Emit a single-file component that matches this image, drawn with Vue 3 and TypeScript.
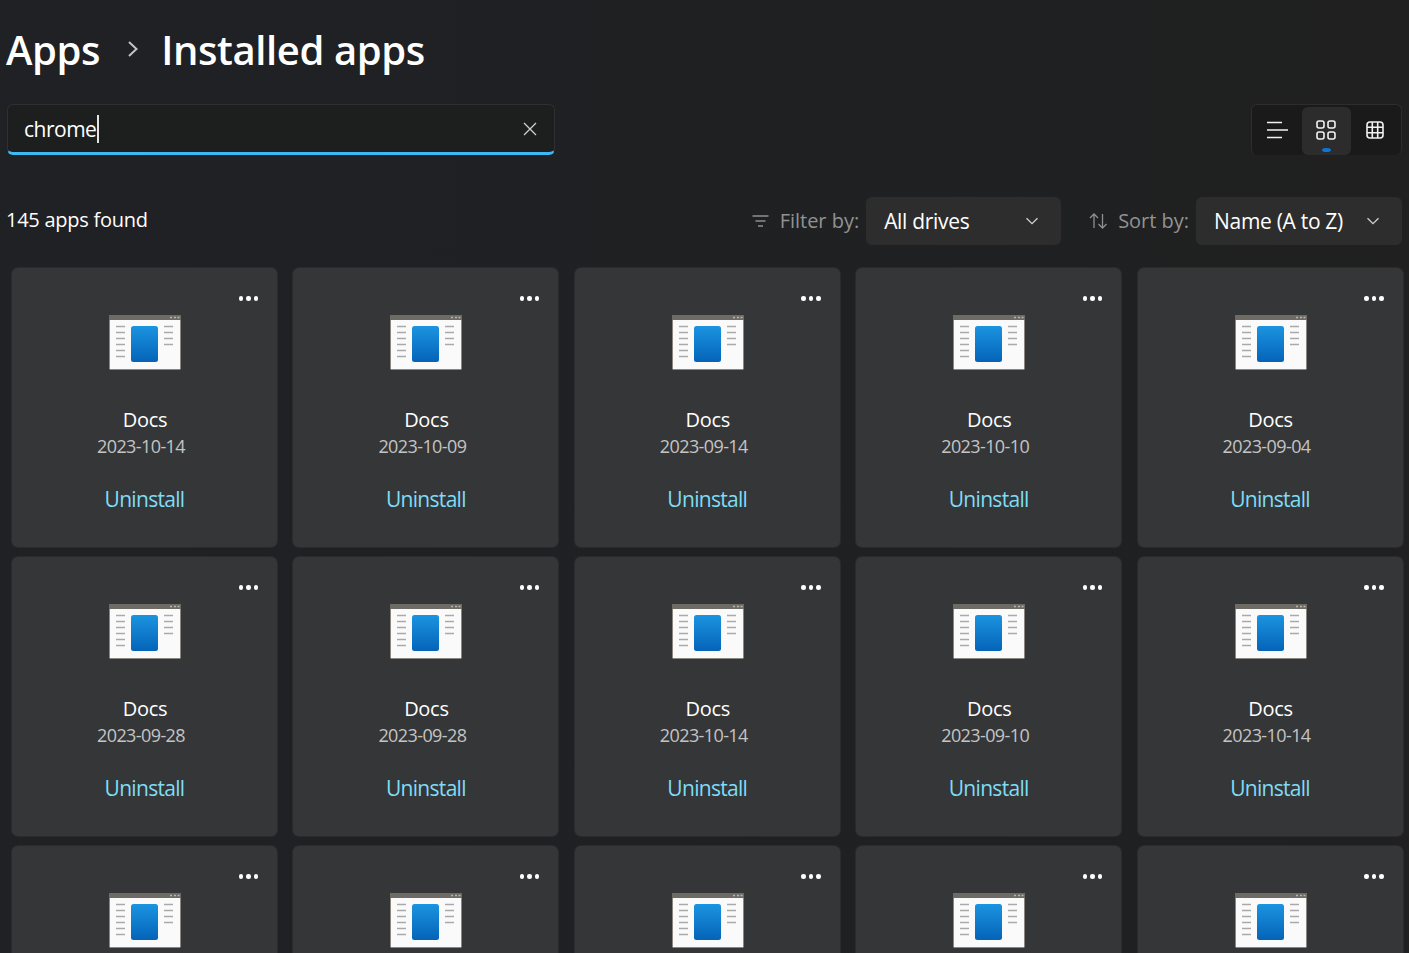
<script setup lang="ts">
const cards: { date?: string }[] = [
  { date: '2023-10-14' }, { date: '2023-10-09' }, { date: '2023-09-14' }, { date: '2023-10-10' }, { date: '2023-09-04' },
  { date: '2023-09-28' }, { date: '2023-09-28' }, { date: '2023-10-14' }, { date: '2023-09-10' }, { date: '2023-10-14' },
  {}, {}, {}, {}, {},
]
</script>

<template>
  <div class="page">
    <h1 class="title">
      <span>Apps</span>
      <svg class="crumb" width="12" height="20" viewBox="0 0 12 20"><path d="M2 3 L9.5 10 L2 17" fill="none" stroke="#c4c4c4" stroke-width="2" /></svg>
      <span>Installed apps</span>
    </h1>

    <div class="toolbar">
      <div class="search">
        <span class="query">chrome</span><span class="caret"></span>
        <svg class="clear" width="14" height="14" viewBox="0 0 14 14"><path d="M1 1 L13 13 M13 1 L1 13" stroke="#cfcfcf" stroke-width="1.3" fill="none" /></svg>
      </div>
      <div class="views">
        <button class="view">
          <svg width="22" height="18" viewBox="0 0 22 18"><path d="M0 1.5 H15 M0 9 H21 M0 16.5 H15" stroke="#f2f2f2" stroke-width="1.4" fill="none" /></svg>
        </button>
        <button class="view active">
          <svg width="20" height="20" viewBox="0 0 20 20" fill="none" stroke="#f2f2f2" stroke-width="1.6"><rect x="1" y="1" width="7" height="7" rx="2" /><rect x="12" y="1" width="7" height="7" rx="2" /><rect x="1" y="12" width="7" height="7" rx="2" /><rect x="12" y="12" width="7" height="7" rx="2" /></svg>
          <span class="dot"></span>
        </button>
        <button class="view">
          <svg width="18" height="18" viewBox="0 0 18 18" fill="none" stroke="#f2f2f2" stroke-width="1.6"><rect x="1" y="1" width="16" height="16" rx="3" /><path d="M6.3 1 V17 M11.7 1 V17 M1 6.3 H17 M1 11.7 H17" /></svg>
        </button>
      </div>
    </div>

    <div class="filters">
      <span class="count">145 apps found</span>
      <div class="controls">
        <svg class="ctl-icon" width="17" height="12" viewBox="0 0 17 12"><path d="M0.5 1 H16.5 M3.5 6 H13.5 M6 11 H11" stroke="#8f8f8f" stroke-width="1.3" fill="none" /></svg>
        <span class="label">Filter by:</span>
        <div class="select drives">
          <span>All drives</span>
          <svg width="14" height="8" viewBox="0 0 14 8"><path d="M1.5 1.2 L7 6.6 L12.5 1.2" fill="none" stroke="#d0d0d0" stroke-width="1.3" /></svg>
        </div>
        <svg class="ctl-icon sort-icon" width="19" height="16" viewBox="0 0 19 16" fill="none" stroke="#8f8f8f" stroke-width="1.3"><path d="M5 15 V1 M1 5 L5 1 L9 5 M13.5 1 V15 M9.5 11 L13.5 15 L17.5 11" /></svg>
        <span class="label">Sort by:</span>
        <div class="select sort">
          <span>Name (A to Z)</span>
          <svg width="14" height="8" viewBox="0 0 14 8"><path d="M1.5 1.2 L7 6.6 L12.5 1.2" fill="none" stroke="#d0d0d0" stroke-width="1.3" /></svg>
        </div>
      </div>
    </div>

    <div class="grid">
      <article v-for="(card, i) in cards" :key="i" class="card">
        <div class="more"><i></i><i></i><i></i></div>
        <svg class="app-icon" width="72" height="56" viewBox="0 0 72 56">
          <defs>
            <linearGradient id="blue" x1="0" y1="0" x2="0" y2="1">
              <stop offset="0" stop-color="#1b94e0" />
              <stop offset="1" stop-color="#0563b8" />
            </linearGradient>
          </defs>
          <rect x="0.5" y="0.5" width="71" height="54" rx="1" fill="#fafafa" stroke="#8b8780" />
          <rect x="0" y="0" width="72" height="5" fill="#6e6a64" />
          <path d="M61 2.5 H63 M65 2.5 H67 M68.5 2.5 H70.5" stroke="#b8b5b0" stroke-width="1.4" />
          <rect x="22" y="11" width="27" height="36" rx="2.5" fill="url(#blue)" />
          <path d="M7 11.5 H16 M7 17.5 H16 M7 23.5 H16 M7 29.5 H16 M7 35.5 H16 M7 41.5 H16 M55 11.5 H64 M55 17.5 H64 M55 23.5 H64 M55 29.5 H64" stroke="#aaa" stroke-width="1.5" />
        </svg>
        <template v-if="card.date">
          <div class="name">Docs</div>
          <div class="date">{{ card.date }}</div>
          <div class="uninstall">Uninstall</div>
        </template>
      </article>
    </div>
  </div>
</template>

<style>
html, body {
  margin: 0;
  height: 100%;
  overflow: hidden;
  background: #202020;
}
</style>

<style scoped>
.page {
  height: 953px;
  overflow: hidden;
  box-sizing: border-box;
  padding-top: 22px;
  background: linear-gradient(90deg, #1f2125, #202020);
  font-family: "Open Sans", "Noto Sans", sans-serif;
  color: #fff;
}
.title {
  display: flex;
  align-items: center;
  margin: 0 0 0 6px;
  height: 54px;
  font-size: 40px;
  font-weight: 600;
  letter-spacing: -0.4px;
}
.crumb {
  margin: 0 22px 0 27px;
}
.toolbar {
  display: flex;
  justify-content: space-between;
  margin: 28px 7px 0 7px;
}
.search {
  position: relative;
  box-sizing: border-box;
  display: flex;
  align-items: center;
  width: 548px;
  height: 51px;
  padding: 0 17px 0 16px;
  background: #1d1f1e;
  border: 1px solid #2f3033;
  border-bottom: 3px solid #3cb8f5;
  border-radius: 6px;
  font-size: 21px;
  letter-spacing: -0.5px;
}
.caret {
  width: 1.5px;
  height: 28px;
  background: #e4e4e4;
  margin-left: 1px;
}
.clear {
  margin-left: auto;
}
.views {
  box-sizing: border-box;
  display: flex;
  align-items: flex-start;
  width: 151px;
  height: 51px;
  padding: 2px;
  background: #1a1a1a;
  border: 1px solid #2d2d2d;
  border-bottom: none;
  border-radius: 6px;
}
.view {
  position: relative;
  flex: 1;
  height: 48px;
  padding: 0 0 3px;
  display: flex;
  align-items: center;
  justify-content: center;
  border: none;
  border-radius: 6px;
  background: transparent;
}
.view.active {
  background: #2c2c2c;
}
.dot {
  position: absolute;
  bottom: 3px;
  left: 50%;
  width: 9px;
  height: 4px;
  margin-left: -4.5px;
  border-radius: 50%;
  background: #0a78d8;
}
.filters {
  display: flex;
  align-items: center;
  justify-content: space-between;
  margin: 42px 7px 0 6px;
}
.count {
  font-size: 20px;
  letter-spacing: -0.25px;
  margin-bottom: 4px;
}
.controls {
  display: flex;
  align-items: center;
}
.ctl-icon {
  margin-right: 11px;
}
.sort-icon {
  margin-left: 28px;
  margin-right: 10px;
}
.label {
  font-size: 20px;
  color: #929292;
  letter-spacing: -0.02px;
  margin-right: 7px;
  margin-bottom: 2px;
}
.select {
  box-sizing: border-box;
  display: flex;
  align-items: center;
  justify-content: space-between;
  height: 48px;
  background: #2d2d2d;
  border-radius: 6px;
  font-size: 21px;
  letter-spacing: -0.3px;
}
.drives {
  width: 195px;
  padding: 0 22px 0 18px;
}
.sort {
  width: 206px;
  padding: 0 22px 0 18px;
}
.grid {
  display: grid;
  grid-template-columns: repeat(5, 265px);
  column-gap: 16.4px;
  row-gap: 10px;
  margin: 23px 0 0 12px;
}
.card {
  position: relative;
  box-sizing: border-box;
  height: 279px;
  display: flex;
  flex-direction: column;
  align-items: center;
  background: #353638;
  border-radius: 6px;
  box-shadow: 0 0 0 1px #2a2b2d;
}
.more {
  position: absolute;
  top: 28px;
  right: 19px;
  display: flex;
  gap: 3px;
}
.more i {
  width: 4.5px;
  height: 4.5px;
  border-radius: 50%;
  background: #fff;
}
.app-icon {
  margin-top: 47px;
  margin-left: 1px;
}
.name {
  margin-top: 35px;
  font-size: 20px;
  line-height: 28px;
  letter-spacing: -0.3px;
  margin-left: 1px;
}
.date {
  margin-top: -1px;
  margin-right: 7px;
  font-size: 18px;
  line-height: 26px;
  color: #c4c4c4;
  letter-spacing: -0.6px;
}
.uninstall {
  margin-top: 26px;
  font-size: 21px;
  line-height: 28px;
  color: #7fdcf5;
  letter-spacing: -0.7px;
}
</style>
